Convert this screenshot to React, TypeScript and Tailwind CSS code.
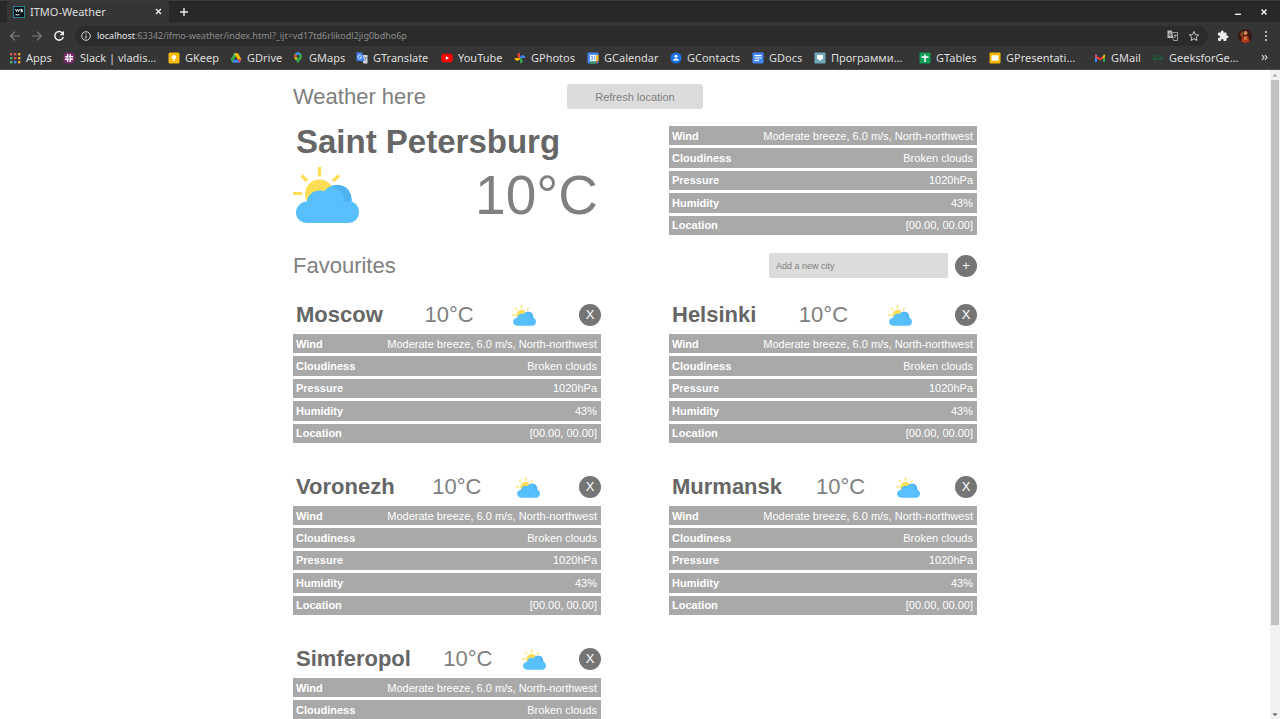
import React from "react";
import type { ReactNode } from "react";

const svg = "size-3 shrink-0";

const AppsIcon = () => (
  <svg className={svg} viewBox="0 0 12 12">
    {["#e2574c", "#e2574c", "#e8a33d", "#4caf6a", "#e2574c", "#e8a33d", "#4caf6a", "#4a86e8", "#e8a33d"].map((c, i) => (
      <rect key={i} x={1 + (i % 3) * 4} y={1 + Math.floor(i / 3) * 4} width="2.4" height="2.4" fill={c} />
    ))}
  </svg>
);
const SlackIcon = () => (
  <svg className={svg} viewBox="0 0 12 12">
    <rect x="0.5" y="0.5" width="11" height="11" rx="4" fill="#7a2a6c" />
    <path d="M4.700 2.500v3M7.300 6.500v3M2.500 7.300h3M6.500 4.700h3M7.300 2.700v1M4.700 8.300v1M2.700 4.700h2M7.300 7.300h2" stroke="#fff" strokeWidth="1.500" strokeLinecap="round" />
  </svg>
);
const KeepIcon = () => (
  <svg className={svg} viewBox="0 0 12 12">
    <rect x="0.5" y="0.5" width="11" height="11" rx="1.5" fill="#fbbc04" />
    <circle cx="6" cy="5.3" r="2.2" fill="#fff" />
    <rect x="5" y="7.8" width="2" height="1.2" fill="#fff" />
  </svg>
);
const DriveIcon = () => (
  <svg className={svg} viewBox="0 0 12 12">
    <path d="M4 1.2h4L4.2 7.6 2.4 10.8.6 7.6z" fill="#34a853" />
    <path d="M4 1.2h4l3.5 6.2H7.6z" fill="#fbbc04" />
    <path d="M4.2 7.4h7.3l-1.9 3.4H2.4z" fill="#4285f4" />
    <path d="M9.6 10.8 7.6 7.4h3.9z" fill="#ea4335" />
    <path d="M6 4.8 4.4 7.4h3.2z" fill="#353535" />
  </svg>
);
const MapsIcon = () => (
  <svg className={svg} viewBox="0 0 12 12">
    <path d="M6 .5a4 4 0 0 1 4 4C10 7.200 7 8.500 6 11.600 5 8.500 2 7.200 2 4.500a4 4 0 0 1 4-4z" fill="#34a853" />
    <path d="M2.900 2 6 4.500 8.500 1.300A4 4 0 0 0 2.900 2z" fill="#4285f4" />
    <path d="M2.900 2A4 4 0 0 0 2.300 6L5 3.700z" fill="#ea4335" />
    <path d="M2.300 6 3.600 8 8 3.500 6 4.500z" fill="#fbbc04" />
    <circle cx="6" cy="4.500" r="1.400" fill="#353535" />
  </svg>
);
const TranslateIcon = () => (
  <svg className={svg} viewBox="0 0 12 12">
    <path d="M5 3h6.500v8.500H7.500z" fill="#d5d8dc" />
    <path d="M.5.5h5.700L8.500 9h-8z" fill="#4285f4" />
    <path d="M5.300 4A1.800 1.800 0 1 0 5.500 5.200H4" stroke="#fff" strokeWidth=".8" fill="none" />
    <path d="M8.300 6h2.500M9.500 5v1M10.300 6 8.700 9" stroke="#5a6b80" strokeWidth=".6" fill="none" />
  </svg>
);
const YouTubeIcon = () => (
  <svg className={svg} viewBox="0 0 12 12">
    <rect x="0.300" y="1.800" width="11.400" height="8.400" rx="2.200" fill="#f00" />
    <path d="M4.900 4.200v3.600L8 6z" fill="#fff" />
  </svg>
);
const PhotosIcon = () => (
  <svg className={svg} viewBox="0 0 12 12">
    <path d="M6 .7A2.650 2.650 0 0 0 6 6z" fill="#ea4335" />
    <path d="M11.300 6A2.650 2.650 0 0 0 6 6z" fill="#4285f4" />
    <path d="M6 11.300A2.650 2.650 0 0 0 6 6z" fill="#34a853" />
    <path d="M.7 6A2.650 2.650 0 0 0 6 6z" fill="#fbbc04" />
  </svg>
);
const CalendarIcon = () => (
  <svg className={svg} viewBox="0 0 12 12">
    <rect x=".5" y=".5" width="11" height="11" rx="1" fill="#4285f4" />
    <path d="M9.200 3h2.300v6.200H9.200z" fill="#fbbc04" />
    <path d="M3 9.200h6.200v2.300H3z" fill="#34a853" />
    <path d="M9.200 9.200h2.300L9.200 11.500z" fill="#ea4335" />
    <rect x="2.800" y="2.800" width="6.400" height="6.400" fill="#e8f0fe" />
    <path d="M4 4.500h1.500v3H4M7.500 4.300v3.300" stroke="#4285f4" strokeWidth=".7" fill="none" />
  </svg>
);
const ContactsIcon = () => (
  <svg className={svg} viewBox="0 0 12 12">
    <circle cx="6" cy="6" r="5.500" fill="#1a73e8" />
    <circle cx="6" cy="4.300" r="1.500" fill="#fff" />
    <path d="M3 8.500c0-2.700 6-2.700 6 0z" fill="#fff" />
  </svg>
);
const DocsIcon = () => (
  <svg className={svg} viewBox="0 0 12 12">
    <rect x="0.500" y="0.500" width="11" height="11" rx="1" fill="#4285f4" />
    <path d="M2.500 3.700h7M2.500 6h7M2.500 8.300h4.500" stroke="#fff" strokeWidth="1.200" />
  </svg>
);
const ProgramIcon = () => (
  <svg className={svg} viewBox="0 0 12 12">
    <rect x="0.500" y="0.500" width="11" height="11" fill="#6fa8b8" />
    <path d="M3 3h6v3.500L6 9 3 6.500z" fill="#fff" />
  </svg>
);
const SheetsIcon = () => (
  <svg className={svg} viewBox="0 0 12 12">
    <rect x="0.500" y="0.500" width="11" height="11" rx="1" fill="#0f9d58" />
    <path d="M6 2.500v7.500M2.500 5h7" stroke="#fff" strokeWidth="1.500" />
  </svg>
);
const SlidesIcon = () => (
  <svg className={svg} viewBox="0 0 12 12">
    <rect x="0.500" y="0.500" width="11" height="11" rx="1" fill="#f4b400" />
    <rect x="2.500" y="3.300" width="7" height="5.400" fill="#fff" />
  </svg>
);
const MailIcon = () => (
  <svg className={svg} viewBox="0 0 12 12">
    <path d="M1 2.500h2v7.500H1z" fill="#4285f4" />
    <path d="M9 2.500h2v7.500H9z" fill="#34a853" />
    <path d="m1 2.500 5 3.800 5-3.800v2.600L6 8.800 1 5.100z" fill="#ea4335" />
    <path d="M9 4 11 2.500v2.600L9 6.600z" fill="#fbbc04" />
  </svg>
);
const GeeksIcon = () => (
  <svg className={svg} viewBox="0 0 12 12">
    <path d="M5.200 4.600A2 2 0 1 0 5.300 6.500H.8M6.800 4.600A2 2 0 1 1 6.700 6.500h4.500" stroke="#1e5a3a" strokeWidth="1.300" fill="none" />
  </svg>
);

const bookmarks: { label: string; icon: ReactNode; width: string }[] = [
  { label: "Apps", icon: <AppsIcon />, width: "w-[54px]" },
  { label: "Slack | vladis…", icon: <SlackIcon />, width: "w-[105px]" },
  { label: "GKeep", icon: <KeepIcon />, width: "w-[62px]" },
  { label: "GDrive", icon: <DriveIcon />, width: "w-[62px]" },
  { label: "GMaps", icon: <MapsIcon />, width: "w-[64px]" },
  { label: "GTranslate", icon: <TranslateIcon />, width: "w-[85px]" },
  { label: "YouTube", icon: <YouTubeIcon />, width: "w-[73px]" },
  { label: "GPhotos", icon: <PhotosIcon />, width: "w-[73px]" },
  { label: "GCalendar", icon: <CalendarIcon />, width: "w-[83px]" },
  { label: "GContacts", icon: <ContactsIcon />, width: "w-[82px]" },
  { label: "GDocs", icon: <DocsIcon />, width: "w-[62px]" },
  { label: "Программи…", icon: <ProgramIcon />, width: "w-[105px]" },
  { label: "GTables", icon: <SheetsIcon />, width: "w-[70px]" },
  { label: "GPresentati…", icon: <SlidesIcon />, width: "w-[105px]" },
  { label: "GMail", icon: <MailIcon />, width: "w-[58px]" },
  { label: "GeeksforGe…", icon: <GeeksIcon />, width: "w-[105px]" },
];

function Browser() {
  return (
    <header className="flex shrink-0 flex-col bg-[#353535] font-['Noto_Sans',sans-serif] text-[#dedede]">
      <div className="flex h-[22px] items-stretch border-t border-[#3a3a3a] bg-[#282828] pl-[7px]">
        <div className="flex w-[162px] items-center rounded-t bg-[#353535] pr-[6px] pl-[6px]">
          <svg className="size-3 shrink-0" viewBox="0 0 12 12">
            <rect x="0.5" y="0.5" width="11" height="11" fill="#0b1418" stroke="#2b7f90" />
            <path d="m2.500 3 1 2.500 1-2 1 2 1-2.500M9.500 3.300H7.800v1.200h1.700v1.200H7.600M2.500 8.800h4" stroke="#fff" strokeWidth=".9" fill="none" />
          </svg>
          <span className="ml-[5px] flex-1 text-[11px] leading-4">ITMO-Weather</span>
          <button aria-label="Close tab" className="flex size-[10px] items-center justify-center">
            <svg className="size-[7px]" viewBox="0 0 7 7"><path d="m1 1 5 5M6 1 1 6" stroke="#eee" strokeWidth="1.300" /></svg>
          </button>
        </div>
        <button aria-label="New tab" className="ml-[10px] flex items-center">
          <svg className="size-[10px]" viewBox="0 0 10 10"><path d="M5 1v8M1 5h8" stroke="#eee" strokeWidth="1.400" /></svg>
        </button>
        <div className="ml-auto flex items-center gap-[18px] pr-[12px]">
          <button aria-label="Minimize">
            <svg className="size-[8px]" viewBox="0 0 8 8"><path d="M1 6.300h6" stroke="#eee" strokeWidth="1.400" /></svg>
          </button>
          <button aria-label="Close window">
            <svg className="size-[8px]" viewBox="0 0 8 8"><path d="m1.500 1.500 5 5M6.500 1.500l-5 5" stroke="#eee" strokeWidth="1.500" /></svg>
          </button>
        </div>
      </div>
      <div className="flex h-[26px] items-center pt-px pl-[9px]">
        <button aria-label="Back">
          <svg className="size-3" viewBox="0 0 12 12"><path d="M11 6H1.800M6 1.600 1.600 6 6 10.400" stroke="#808080" strokeWidth="1.200" fill="none" /></svg>
        </button>
        <button aria-label="Forward" className="ml-[10px]">
          <svg className="size-3" viewBox="0 0 12 12"><path d="M1 6h9.200M6 1.600 10.400 6 6 10.400" stroke="#808080" strokeWidth="1.200" fill="none" /></svg>
        </button>
        <button aria-label="Reload" className="ml-[10px]">
          <svg className="size-3" viewBox="0 0 12 12"><path d="M9.800 3.500A4.300 4.300 0 1 0 10.300 7" stroke="#eee" strokeWidth="1.500" fill="none" /><path d="M11 .8v4.400H6.600z" fill="#eee" /></svg>
        </button>
        <div className="ml-[10px] flex h-5 flex-1 items-center rounded-full bg-[#2b2b2b] px-[6px]">
          <svg className="size-[10px]" viewBox="0 0 10 10"><circle cx="5" cy="5" r="4.300" stroke="#ddd" fill="none" /><path d="M5 4.400v3M5 2.400v1.100" stroke="#ddd" strokeWidth="1.100" /></svg>
          <span className="ml-[6px] flex-1 text-[9px] leading-4 text-[#8c8c8c]"><span className="text-[#e6e6e6]">localhost</span>:63342/ifmo-weather/index.html?_ijt=vd17td6rlikodl2jig0bdho6p</span>
          <svg className="size-[11px]" viewBox="0 0 11 11"><path d="M.5.5h4.300L6.500 8h-6z" fill="#bbb" /><path d="M5.500 2.500H10.500v8h-4L6 8.500M7 5.500h2.700M8.300 4.500v1M9 5.500 7.300 8" stroke="#bbb" strokeWidth=".8" fill="none" /><path d="M4.300 3.700a1.300 1.300 0 1 0 .2 1.300H3.300" stroke="#333" strokeWidth=".8" fill="none" /></svg>
          <svg className="mr-[2px] ml-[10px] size-3" viewBox="0 0 24 24"><path d="m12 3 2.700 6.300 6.800.6-5.200 4.500 1.600 6.600L12 17.500 6.100 21l1.600-6.600-5.200-4.500 6.800-.6z" stroke="#ccc" strokeWidth="2" fill="none" /></svg>
        </div>
        <div className="flex items-center pr-[9px] pl-[9px]">
          <svg className="size-3" viewBox="0 0 24 24"><path d="M20.500 11H19V7a2 2 0 0 0-2-2h-4V3.500a2.500 2.500 0 0 0-5 0V5H4a2 2 0 0 0-2 2v3.800h1.500a2.700 2.700 0 0 1 0 5.400H2V20a2 2 0 0 0 2 2h3.800v-1.500a2.700 2.700 0 0 1 5.400 0V22H17a2 2 0 0 0 2-2v-4h1.500a2.500 2.500 0 0 0 0-5z" fill="#eee" /></svg>
          <svg className="ml-[9px] size-[14px]" viewBox="0 0 14 14"><circle cx="7" cy="7" r="7" fill="#3a1710" /><path d="M3 12.200 4.500 8l2-1.500L10 7l1.500 5.300a7 7 0 0 1-8.500 0z" fill="#b03a20" /><circle cx="7.500" cy="4" r="2" fill="#d08a58" /><path d="M2 5.500 4.500 2l1 2.500L4 9z" fill="#8c4a28" /><path d="M6 8h3v3H6z" fill="#c8703c" /></svg>
          <svg className="ml-[9px] h-3 w-[10px]" viewBox="0 0 10 12"><circle cx="5" cy="2" r="1" fill="#ddd" /><circle cx="5" cy="6" r="1" fill="#ddd" /><circle cx="5" cy="10" r="1" fill="#ddd" /></svg>
        </div>
      </div>
      <nav className="flex h-[22px] items-center border-b border-[#4a4a4a] pr-[12px] pb-[2px] pl-[9px]">
        <div className="flex flex-1 items-center overflow-hidden">
          {bookmarks.map((b) => (
            <a key={b.label} href="#" className={`flex shrink-0 items-center gap-[5px] text-[11px] leading-4 whitespace-nowrap ${b.width}`}>
              {b.icon}
              {b.label}
            </a>
          ))}
        </div>
        <button aria-label="More bookmarks">
          <svg className="size-[7px]" viewBox="0 0 7 7"><path d="m1 1 2 2.500L1 6M4 1l2 2.500L4 6" stroke="#ddd" strokeWidth="1.200" fill="none" /></svg>
        </button>
      </nav>
    </header>
  );
}

function WeatherIcon({ className }: { className: string }) {
  return (
    <svg className={className} viewBox="0 0 66 56" aria-label="Partly cloudy">
      <path d="M26.500 0v9.500M8.500 8.500l5.500 5.500M46 8.500 40 14M0 26.500h9" stroke="#ffdd54" strokeWidth="3.200" />
      <circle cx="26.500" cy="27" r="14.500" fill="#ffdd54" />
      <path d="M14.500 56C8 56 3 51.500 3 45.500S8 35 14 34.500C14.500 28 20 23.500 27 23.500c2 0 3.500.3 4.500.7C34 20.500 38.500 18 44 18c8.500 0 14.500 6 14.500 14.500v2C63 36 66 40 66 45c0 6.500-5 11-11 11z" fill="#58bffd" />
      <path d="M44 18c8.500 0 14.500 6 14.500 14.500v2C55.500 33.700 53.500 33.700 51 34.500c0-7-4-12.500-12.500-15.500 1.800-.7 3.600-1 5.500-1z" fill="#50b3f3" />
    </svg>
  );
}

const details = [
  ["Wind", "Moderate breeze, 6.0 m/s, North-northwest"],
  ["Cloudiness", "Broken clouds"],
  ["Pressure", "1020hPa"],
  ["Humidity", "43%"],
  ["Location", "[00.00, 00.00]"],
];

function Details() {
  return (
    <dl className="grid h-[109px] grid-rows-5 gap-[3px] text-[11px] leading-3 text-white">
      {details.map(([name, value]) => (
        <div key={name} className="flex items-center justify-between bg-[#a9a9a9] pr-1 pl-[3px]">
          <dt className="font-bold">{name}</dt>
          <dd>{value}</dd>
        </div>
      ))}
    </dl>
  );
}

const round = "flex size-[22px] shrink-0 items-center justify-center rounded-full bg-[#757575] text-[13px] leading-4 text-white";

function City({ name }: { name: string }) {
  return (
    <li>
      <div className="mb-1 flex h-[30px] items-center justify-between">
        <h3 className="px-[3px] text-[22px] leading-6 font-bold text-[#666]">{name}</h3>
        <span className="text-[22px] leading-6 text-[#808080]">10°C</span>
        <WeatherIcon className="mr-1 h-[21px] w-6" />
        <button aria-label={`Remove ${name}`} className={round}>X</button>
      </div>
      <Details />
    </li>
  );
}

export default function App() {
  return (
    <div className="flex h-screen flex-col overflow-hidden bg-white">
      <Browser />
      <div className="flex min-h-0 flex-1">
        <main className="flex-1 overflow-y-auto font-['Liberation_Sans',Arial,sans-serif] [scrollbar-width:none]">
          <div className="mx-auto max-w-[684px] pt-[14px]">
            <div className="grid h-[25px] grid-cols-[1fr_136px_1fr] items-center">
              <h1 className="text-[22px] leading-6 text-[#808080]">Weather here</h1>
              <button className="h-[25px] rounded-[3px] bg-[#dcdcdc] text-[11px] leading-4 text-[#808080]">Refresh location</button>
            </div>
            <section className="mt-[17px] grid grid-cols-2 gap-x-[68px]">
              <div>
                <h2 className="px-[3px] text-[33px] leading-8 font-bold text-[#666]">Saint Petersburg</h2>
                <div className="mt-[5px] flex items-center justify-between">
                  <WeatherIcon className="h-14 w-[66px]" />
                  <span className="pr-[3px] text-[55px] leading-[64px] text-[#808080]">10°C</span>
                </div>
              </div>
              <Details />
            </section>
            <div className="mt-[18px] flex h-[25px] items-center justify-between">
              <h2 className="text-[22px] leading-6 text-[#808080]">Favourites</h2>
              <form className="flex items-center gap-[7px]" onSubmit={(e) => e.preventDefault()}>
                <input aria-label="Add a new city" placeholder="Add a new city" className="h-[25px] w-[179px] rounded-xs bg-[#dcdcdc] px-[7px] text-[9px] leading-3 placeholder:text-[#808080]" />
                <button aria-label="Add city" className={round}>+</button>
              </form>
            </div>
            <ul className="mt-[22px] grid grid-cols-2 gap-x-[68px] gap-y-[29px]">
              {["Moscow", "Helsinki", "Voronezh", "Murmansk", "Simferopol"].map((c) => (
                <City key={c} name={c} />
              ))}
            </ul>
          </div>
        </main>
        <div aria-hidden="true" className="flex w-[10px] flex-col items-center bg-[#f1f1f1]">
          <svg className="my-px h-2 w-[10px]" viewBox="0 0 10 8"><path d="M2.500 5.500h5L5 3z" fill="#a0a0a0" /></svg>
          <div className="w-2 grow-[545] bg-[#c1c1c1]" />
          <div className="grow-[86]" />
          <svg className="h-2 w-[10px]" viewBox="0 0 10 8"><path d="M2.500 2.500h5L5 5z" fill="#505050" /></svg>
        </div>
      </div>
    </div>
  );
}
